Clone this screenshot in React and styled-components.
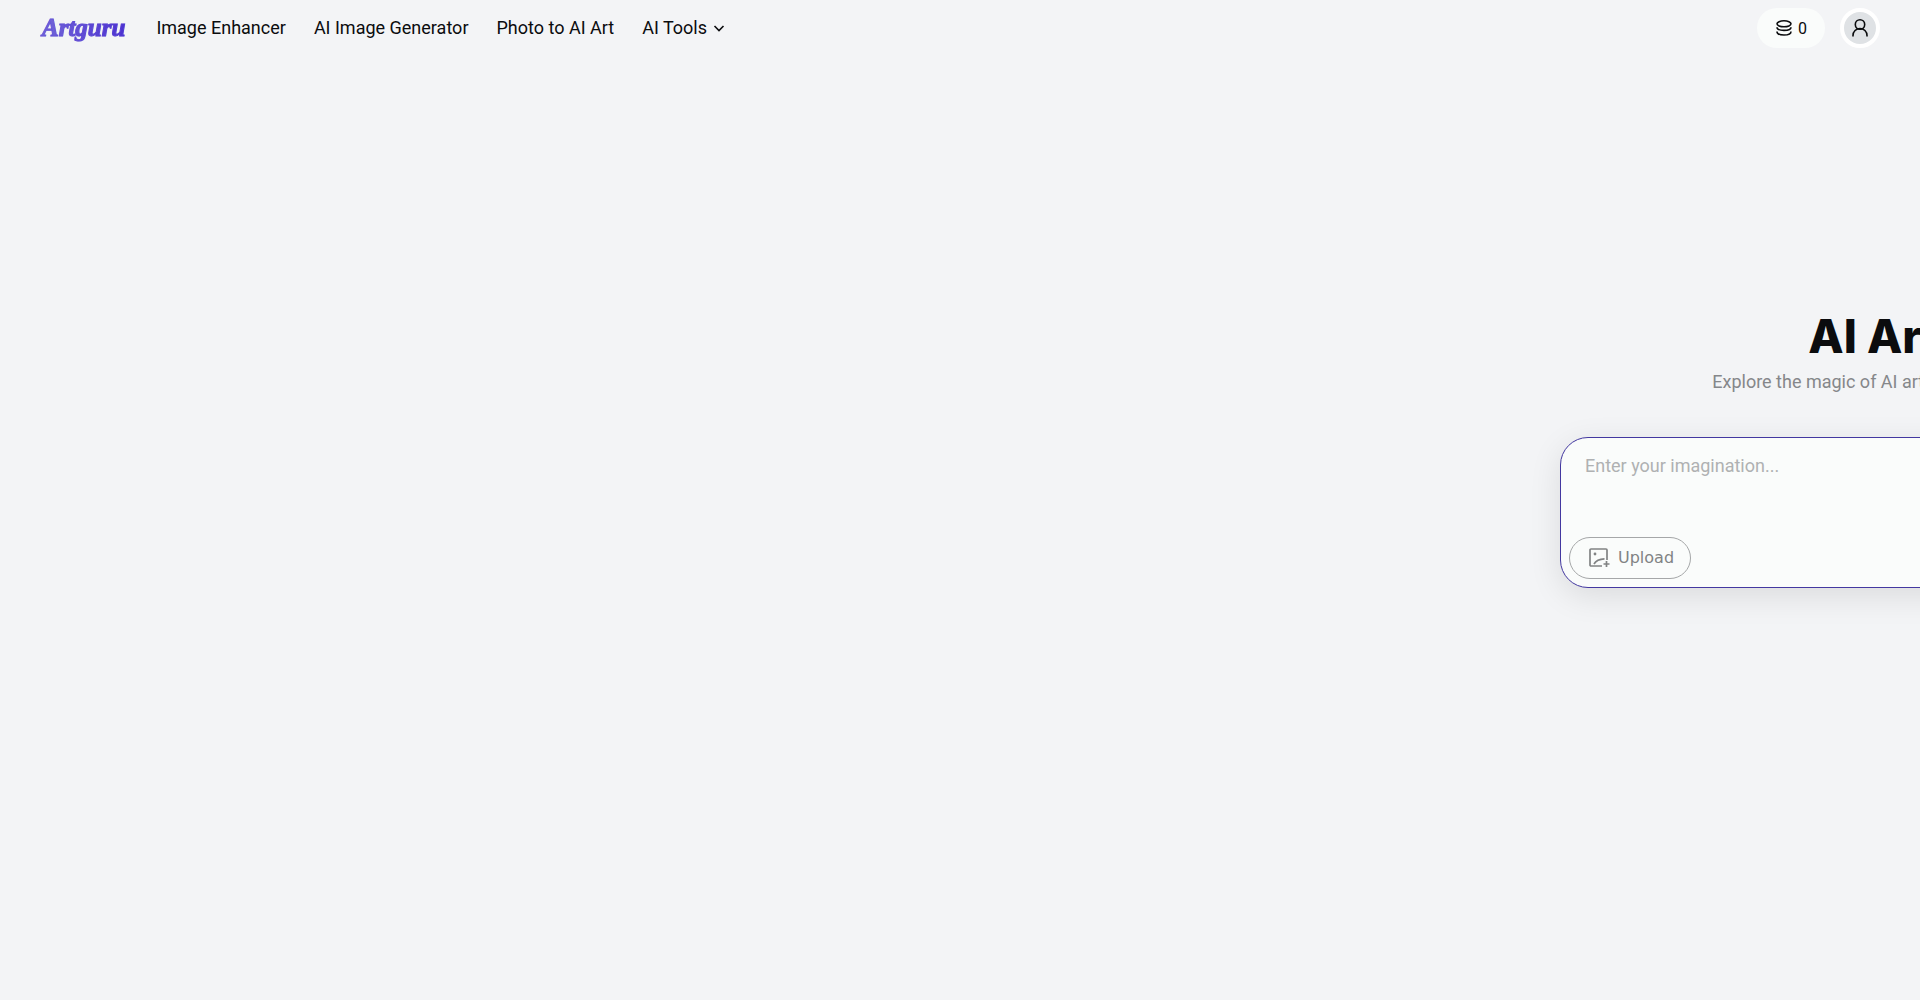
import React, { useState } from "react";
import styled, { createGlobalStyle } from "styled-components";

const links = ["Image Enhancer", "AI Image Generator", "Photo to AI Art"];

function Header() {
  return (
    <Bar>
      <Logo href="#home">Artguru</Logo>
      <Nav>
        {links.map((link) => (
          <NavLink href="#tools" key={link}>
            {link}
          </NavLink>
        ))}
        <NavButton type="button">
          AI Tools
          <svg width="12" height="12" viewBox="0 0 12 12" fill="none" stroke="currentColor" strokeWidth="1.6">
            <path d="M1.5 4 6 8.5 10.5 4" />
          </svg>
        </NavButton>
      </Nav>
      <Credits type="button">
        <svg width="18" height="18" viewBox="0 0 18 18" fill="none" stroke="currentColor" strokeWidth="1.6">
          <ellipse cx="9" cy="4.800" rx="7" ry="3" />
          <path d="M2 8.200c0 1.900 3 3.200 7 3.200s7-1.300 7-3.200M2 12.400c0 2.200 3 3.600 7 3.600s7-1.400 7-3.600" />
        </svg>
        0
      </Credits>
      <Account type="button" aria-label="Account">
        <svg width="18" height="20" viewBox="0 0 18 20" fill="none" stroke="currentColor" strokeWidth="1.6">
          <circle cx="9" cy="6.500" r="4.700" />
          <path d="M2 18.500v-1a7 7 0 0 1 14 0v1" />
        </svg>
      </Account>
    </Bar>
  );
}

function PromptBox() {
  const [prompt, setPrompt] = useState("");

  return (
    <Card>
      <Prompt
        aria-label="Prompt"
        placeholder="Enter your imagination..."
        value={prompt}
        onChange={(e) => setPrompt(e.target.value)}
      />
      <Upload type="button">
        <svg width="22" height="22" viewBox="0 0 22 22" fill="none" stroke="currentColor" strokeWidth="1.7">
          <path d="M14 19H3a1 1 0 0 1-1-1V3a1 1 0 0 1 1-1h15a1 1 0 0 1 1 1v10" />
          <path d="M6 17c2-3.500 6-5 10.500-5.200M18.500 14v6M15.500 17h6" />
          <circle cx="7" cy="7" r="1.400" fill="currentColor" stroke="none" />
        </svg>
        Upload
      </Upload>
    </Card>
  );
}

function App() {
  return (
    <Page>
      <GlobalStyle />
      <Header />
      <Main>
        <Hero>
          <Intro>
            <Title>AI Art Generator</Title>
            <Subtitle>Explore the magic of AI art generator and turn your imagination into art</Subtitle>
          </Intro>
          <PromptBox />
        </Hero>
      </Main>
    </Page>
  );
}

export default App;

const GlobalStyle = createGlobalStyle`
  * {
    box-sizing: border-box;
  }
  body {
    margin: 0;
    background: #f3f4f6;
    color: #0b0c0e;
    font-family: Roboto, sans-serif;
  }
  button, textarea {
    font: inherit;
    color: inherit;
    border: 0;
    background: none;
    padding: 0;
  }
  button {
    cursor: pointer;
  }
`;

const Page = styled.div`
  min-height: 100vh;
  overflow: hidden;
`;

const Bar = styled.header`
  display: flex;
  align-items: center;
  height: 56px;
  padding: 0 40px;
`;

const Logo = styled.a`
  padding: 0 2px;
  margin-right: 29px;
  font: italic 700 25px/32px "Liberation Serif", serif;
  text-decoration: none;
  color: transparent;
  background: linear-gradient(90deg, #7468d8, #4a2fd0);
  background-clip: text;
  -webkit-text-stroke: 1px #5a45d666;
`;

const Nav = styled.nav`
  display: flex;
  align-items: center;
  gap: 28px;
  flex: 1;
  font-size: 18px;
  line-height: 24px;
`;

const NavLink = styled.a`
  color: inherit;
  text-decoration: none;
`;

const NavButton = styled.button`
  display: flex;
  align-items: center;
  gap: 6px;
`;

const Credits = styled.button`
  display: flex;
  align-items: center;
  justify-content: center;
  gap: 5px;
  height: 40px;
  padding: 0 18px;
  margin-right: 15px;
  border-radius: 20px;
  background: #fafcfb;
`;

const Account = styled.button`
  display: flex;
  align-items: center;
  justify-content: center;
  width: 40px;
  height: 40px;
  border: 4px solid #fff;
  border-radius: 50%;
  background: #dfe2e5;
`;

const Main = styled.main`
  padding: 248px 0 80px 81.25%;
`;

const Hero = styled.section`
  width: 868px;
`;

const Intro = styled.div`
  text-align: center;
  white-space: nowrap;
  margin-bottom: 41px;
`;

const Title = styled.h1`
  margin: 0;
  font: 800 46px/64px Inter, sans-serif;
`;

const Subtitle = styled.p`
  margin: 0;
  font-size: 18px;
  line-height: 28px;
  color: #85878a;
`;

const Card = styled.div`
  display: flex;
  flex-direction: column;
  align-items: flex-start;
  height: 151px;
  padding: 15px 8px 8px;
  border: 1px solid #4338a0;
  border-radius: 28px;
  background: #fafcfb;
  box-shadow: 0 8px 32px rgba(0, 0, 0, 0.1);
`;

const Prompt = styled.textarea`
  flex: 1;
  width: 100%;
  padding: 0 16px;
  resize: none;
  outline: none;
  font-size: 18px;
  line-height: 26px;
  &::placeholder {
    color: #afb1b2;
  }
`;

const Upload = styled.button`
  display: flex;
  align-items: center;
  gap: 8px;
  height: 42px;
  padding: 0 16px 0 18px;
  border: 1px solid #a5a7a8;
  border-radius: 21px;
  color: #818384;
  font: 16px/24px "DejaVu Sans", sans-serif;
`;
